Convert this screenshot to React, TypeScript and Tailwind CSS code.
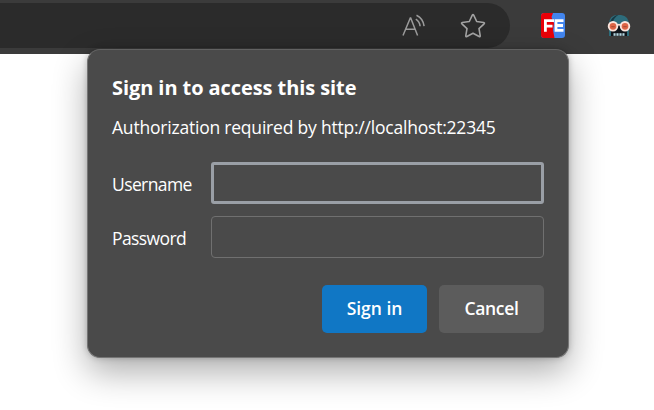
import React from "react";

function ReadAloudIcon() {
  return (
    <svg width="24" height="24" viewBox="0 0 24 24" fill="none" stroke="#9b9b9b" strokeWidth="1.5">
      <path d="M1 21.5 8.3 4h.4L15.6 21.5M3.6 15.2h9.8" />
      <path d="M13.8 5.2c2.5 1.6 4 4 4.3 7M14.5 1.2c4.2 2 7 6 7.6 11" />
    </svg>
  );
}

function StarIcon() {
  return (
    <svg width="26" height="26" viewBox="0 0 26 26" fill="none" stroke="#a3a3a3" strokeWidth="1.6" strokeLinejoin="round">
      <path d="M12.3 2.2Q13 .9 13.7 2.2L16.7 8.5 23.7 9.5Q25 9.8 24.1 10.8L19 15.7 20.2 22.7Q20.3 24 19.1 23.5L13 20.2 6.9 23.5Q5.7 24 5.8 22.7L7 15.7 1.9 10.8Q1 9.8 2.3 9.5L9.3 8.5Z" />
    </svg>
  );
}

function FeIcon() {
  return (
    <svg width="24" height="25" viewBox="0 0 24 25">
      <rect width="24" height="25" rx="3" fill="#4285ee" />
      <path d="M3 0H12L10.5 4 13 10.5 12 17 13.5 25H3Q0 25 0 22V3Q0 0 3 0Z" fill="#e90007" />
      <g fill="none" stroke="#fff" strokeWidth="2.8">
        <path d="M4.4 18.8V7.7H13M4.4 13.2H11.5M22.5 7.7H15V17.4H22.5M15 12.5H22" />
      </g>
    </svg>
  );
}

function RobotIcon() {
  return (
    <svg width="24" height="24" viewBox="0 0 24 24">
      <path d="M2 22V10Q2 1 11 1H14Q22 2 22 11V22Z" fill="#2d6c7b" />
      <path d="M3 8.5Q4.5 3.2 9.5 1.3L11.5 1Q7 3.5 6 7.5Z" fill="#173843" />
      <path d="M4 17 9.5 10.5H14.5L20 17V22H4Z" fill="#10151b" />
      <path d="M6.5 19.2H17.5V21.8H6.5Z" fill="#b4d5df" />
      <path d="M9 19V22M12 19V22M15 19V22" stroke="#10151b" strokeWidth=".8" />
      <path d="M9 10.8H15" stroke="#f3ded6" strokeWidth="1.8" />
      <circle cx="6" cy="12.3" r="4.3" fill="#dd6546" stroke="#fae5dd" strokeWidth="1.9" />
      <circle cx="18" cy="12.3" r="4.3" fill="#dd6546" stroke="#fae5dd" strokeWidth="1.9" />
      <path d="M4.3 12.7H7.7M16.3 12.7H19.7" stroke="#ad4f38" strokeWidth="1.2" />
    </svg>
  );
}

function Toolbar() {
  return (
    <header className="flex h-[54px] items-start bg-[#3b3b3b] pt-[3px]">
      <div className="flex h-[45px] w-[510px] items-center justify-end rounded-r-full bg-[#2b2b2b] pr-6">
        <div className="mr-[34px]"><ReadAloudIcon /></div>
        <StarIcon />
      </div>
      <div className="ml-[31px] mt-[10px]"><FeIcon /></div>
      <div className="ml-[42px] mt-[11px]"><RobotIcon /></div>
    </header>
  );
}

function Field({ label, type, focused }: { label: string; type: string; focused?: boolean }) {
  return (
    <label className="flex h-[42px] items-center">
      <span className="w-[99px] pt-px text-[17.5px] leading-6 tracking-[-0.6px]">{label}</span>
      <input
        type={type}
        className={
          focused
            ? "h-[42px] w-[333px] rounded-[3px] border-[3px] border-[#9a9fa6] bg-transparent outline-none"
            : "h-[42px] w-[333px] rounded-[4px] border border-[#707070] bg-transparent outline-none"
        }
      />
    </label>
  );
}

function SignInDialog() {
  return (
    <section className="absolute left-[87px] top-[49px] flex h-[309px] w-[482px] flex-col rounded-[13px] border border-[#757575] border-t-[#626262] bg-[#4a4a4a] px-6 pt-6 text-white shadow-[0_14px_34px_rgba(0,0,0,0.32),0_0_6px_rgba(0,0,0,0.22)]">
      <h1 className="whitespace-nowrap text-[20px] font-bold leading-7"><span className="tracking-[-0.08px]">Sign in to access this site</span></h1>
      <p className="mt-[13px] whitespace-nowrap text-[17.5px] leading-6"><span className="tracking-[-0.21px]">Authorization required by http://localhost:22345</span></p>
      <form className="mt-[23px] flex flex-col gap-3">
        <Field label="Username" type="text" focused />
        <Field label="Password" type="password" />
        <div className="mt-[15px] flex justify-end gap-3 text-[17.5px] font-semibold">
          <button type="button" className="h-12 w-[105px] rounded-[5px] bg-[#1077c5] pb-0.5 tracking-[-0.02px]">Sign in</button>
          <button type="button" className="h-12 w-[105px] rounded-[5px] bg-[#5c5c5c] pb-0.5 tracking-[-0.3px]">Cancel</button>
        </div>
      </form>
    </section>
  );
}

export default function App() {
  return (
    <main className="relative h-[410px] w-[654px] overflow-hidden bg-white font-['Open_Sans','Noto_Sans',sans-serif]">
      <Toolbar />
      <SignInDialog />
    </main>
  );
}
